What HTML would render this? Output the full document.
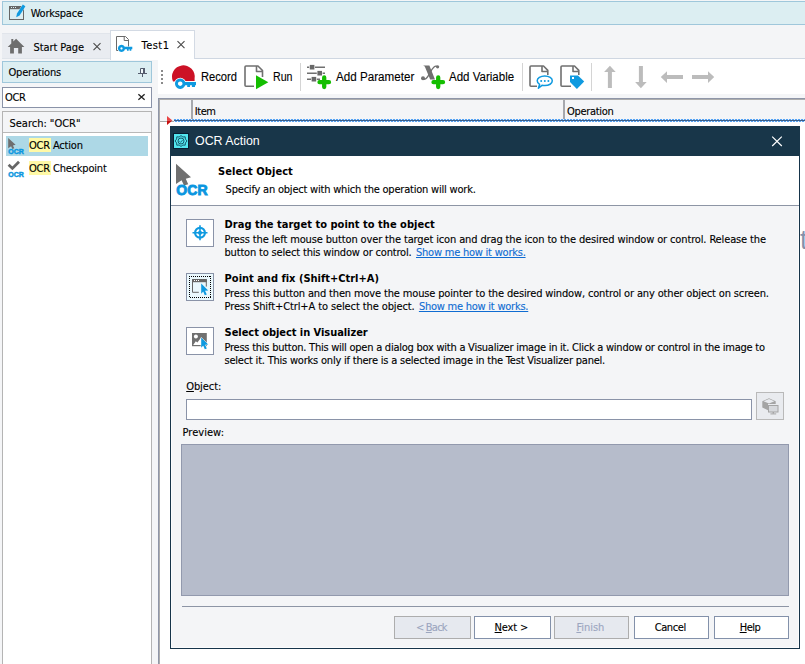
<!DOCTYPE html>
<html><head><meta charset="utf-8"><title>Workspace</title>
<style>
*{box-sizing:border-box;margin:0;padding:0}
html,body{width:805px;height:664px;overflow:hidden;background:#f4f5f7;color:#000}
#root{position:relative;width:805px;height:664px;overflow:hidden;background:#f4f5f7}
.a{position:absolute;white-space:nowrap}
svg.a{overflow:visible}
.lnk{color:#0f6cd2;text-decoration:underline;text-underline-offset:1px}
u{text-underline-offset:1px}
.btn{position:absolute;top:616px;height:23px;border:1px solid #8391aa;background:#fff}
.btn.dis{background:#e6e9ef;border-color:#adadad}
.ib{position:absolute;left:186px;width:28px;height:28px;border:1px solid #8a93a8;background:#fff}
.ocr{font-family:"Liberation Sans","DejaVu Sans",sans-serif;font-weight:bold;color:#0a96e0;-webkit-text-stroke:0.9px #0a96e0}

.t,.s{-webkit-text-stroke:0.12px currentColor}

.t{font-family:"DejaVu Sans Condensed","Liberation Sans",sans-serif;font-weight:normal;font-size:11px;line-height:14px}
.tb{font-family:"DejaVu Sans Condensed","Liberation Sans",sans-serif;font-weight:bold;font-size:11px;line-height:14px}
.s{font-family:"Liberation Sans","DejaVu Sans",sans-serif;font-weight:normal;font-size:12.5px;line-height:15.5px}
.h{font-family:"Liberation Sans","DejaVu Sans",sans-serif;font-weight:normal;font-size:13px;line-height:16px}
</style></head><body><div id="root">
<!-- workspace bar -->
<div class="a" style="left:2px;top:1px;width:810px;height:24px;background:#dceef2;border:1px solid #9fc7db"></div>
<svg class="a" style="left:0;top:0" width="40" height="26" viewBox="0 0 40 26">
 <rect x="9.5" y="6.5" width="14" height="13" fill="none" stroke="#666" stroke-width="1"/>
 <rect x="9" y="6" width="15" height="3.2" fill="#666"/>
 <rect x="11" y="7" width="1" height="1" fill="#dceef2"/><rect x="13" y="7" width="1" height="1" fill="#dceef2"/><rect x="15" y="7" width="1" height="1" fill="#dceef2"/>
 <path d="M16.2 17.3 L17 13.6 L22.8 4.6 L25.4 6.2 L19.6 15.4 Z" fill="#0f9ae0" stroke="#dceef2" stroke-width="0.8" paint-order="stroke"/>
</svg>

<!-- tab strip -->
<div class="a" style="left:2px;top:33px;width:108px;height:25px;background:#e9ecf1;border-top:1px solid #e1e5eb"></div>
<div class="a" style="left:195px;top:58px;width:620px;height:1px;background:#cfd7e2"></div>
<div class="a" style="left:2px;top:58px;width:109px;height:1px;background:#dfe4ea"></div>
<div class="a" style="left:110px;top:30px;width:85px;height:30px;background:#fff;border:1px solid #d3dae4;border-bottom:none"></div>
<svg class="a" style="left:0;top:28px" width="200" height="32" viewBox="0 28 200 32">
 <!-- home -->
 <path d="M16.1 38.7 L24.4 46.9 L21.9 46.9 L21.9 53.4 L18.2 53.4 L18.2 48 L13.9 48 L13.9 53.4 L10.1 53.4 L10.1 46.9 L7.7 46.9 L11.3 43.4 L11.3 39 L13.3 39 L13.3 41.5 Z" fill="#6e6e6e"/>
 <!-- close x start page -->
 <path d="M93.5 43.2 L100.5 50.2 M100.5 43.2 L93.5 50.2" stroke="#4a4a4a" stroke-width="1.1" fill="none"/>
 <!-- doc key -->
 <path d="M116.5 50.5 V36.5 H125.5 L128.5 39.5 V46.5 M124.2 36.5 V40.5 H128.5 M116.5 50.5 H118" fill="none" stroke="#6a6a6a" stroke-width="1"/>
 <path d="M121.5 44.8 a3.6 3.6 0 1 0 0.001 0 Z M121.5 47.3 a1.1 1.1 0 1 1 -0.001 0 Z" fill="#0f9ae0" fill-rule="evenodd"/>
 <path d="M124.5 46.8 H132.3 V49.2 H131.3 V50.8 H129.6 V49.2 H128.7 V50.8 H127 V49.2 H124.5 Z" fill="#0f9ae0"/>
 <!-- close x test1 -->
 <path d="M177.5 41.2 L184.5 48.2 M184.5 41.2 L177.5 48.2" stroke="#4a4a4a" stroke-width="1.1" fill="none"/>
</svg>

<!-- operations panel -->
<div class="a" style="left:2px;top:61px;width:150px;height:22px;background:#dceef2;border:1px solid #9fc7db"></div>
<svg class="a" style="left:136px;top:64px" width="14" height="16" viewBox="136 64 14 16">
 <path d="M140.5 73 V68.5 H144" fill="none" stroke="#555c6e" stroke-width="1"/><rect x="141" y="69" width="2" height="4" fill="#f2fafc"/>
 <rect x="143" y="68" width="2" height="5" fill="#555c6e"/>
 <rect x="138" y="73" width="9" height="1" fill="#555c6e"/>
 <rect x="142" y="74" width="1" height="3" fill="#555c6e"/>
</svg>
<div class="a" style="left:2px;top:87px;width:150px;height:21px;background:#fff;border:1px solid #8a93a8"></div>
<svg class="a" style="left:136px;top:92px" width="12" height="10" viewBox="136 92 12 10">
 <path d="M138.4 94.2 L144.6 99.8 M144.6 94.2 L138.4 99.8" stroke="#222" stroke-width="1.3" fill="none"/>
</svg>
<div class="a" style="left:2px;top:111px;width:150px;height:560px;background:#fff;border:1px solid #b4b4b4"></div>
<div class="a" style="left:3px;top:112px;width:148px;height:21px;background:#f4f5f7;border-bottom:1px solid #b8b8b8"></div>
<div class="a" style="left:6px;top:136px;width:142px;height:20px;background:#add8e6"></div>
<div class="a" style="left:29px;top:138px;width:22px;height:14px;background:#fff9a6"></div>
<div class="a" style="left:29px;top:161px;width:22px;height:14px;background:#fff9a6"></div>
<svg class="a" style="left:6px;top:136px" width="22" height="44" viewBox="6 136 22 44">
 <path d="M8.2 138 L15.6 144.8 L12.9 145.4 L14.3 148.3 L12.4 149 L11.1 146.2 L8.2 148.3 Z" fill="#6e6e6e"/>
 <path d="M8.6 164.8 L12.4 168.4 L19 161.8" fill="none" stroke="#666" stroke-width="2.8"/>
</svg>
<div class="a ocr" style="left:8.2px;top:147.8px;font-size:7px;line-height:8px;-webkit-text-stroke-width:0.45px">OCR</div>
<div class="a ocr" style="left:8.2px;top:170.8px;font-size:7px;line-height:8px;-webkit-text-stroke-width:0.45px">OCR</div>

<!-- toolbar -->
<div class="a" style="left:158px;top:59px;width:650px;height:35px;background:#fff"></div>
<svg class="a" style="left:158px;top:59px" width="647" height="35" viewBox="158 59 647 35">
 <g fill="#8a8a8a"><rect x="161" y="70" width="2" height="2"/><rect x="161" y="74" width="2" height="2"/><rect x="161" y="78" width="2" height="2"/><rect x="161" y="82" width="2" height="2"/></g>
 <!-- record -->
 <path d="M173 81.5 A11.4 11.4 0 1 1 194.6 78.6 L194.6 81 L173.2 81.6 Z" fill="#cc1226"/>
 <g stroke="#fff" stroke-width="1.7" fill="#fff"><circle cx="180.2" cy="83.7" r="5.2"/><path d="M184 82 H196 V85.3 H195 V87 H191.9 V85.3 H190 V87 H187.2 V85.3 H184 Z"/></g>
 <path d="M180.2 78.5 a5.2 5.2 0 1 0 0.001 0 Z M180.2 81.4 a2.3 2.3 0 1 1 -0.001 0 Z" fill="#0f9ae0" fill-rule="evenodd"/>
 <path d="M184 82 H196 V85.3 H195 V87 H191.9 V85.3 H190 V87 H187.2 V85.3 H184 Z" fill="#0f9ae0"/>
 <!-- run -->
 <path d="M254 86.3 H246 Q245 86.3 245 85.3 V67 Q245 66 246 66 H258 L262.5 70.5 V77 M256.5 66 V71.5 H262.5" fill="none" stroke="#707070" stroke-width="1.6" stroke-linejoin="round"/>
 <path d="M256 75.2 L268.3 82.2 L256 89.2 Z" fill="#14be00"/>
 <rect x="300" y="63" width="1" height="28" fill="#d4d4d4"/>
 <!-- add parameter -->
 <g stroke="#707070" stroke-width="1.6"><path d="M307 67.2 H325 M307 73.2 H325 M307 79.2 H320"/></g>
 <g fill="#686868" stroke="#fff" stroke-width="1.2" paint-order="stroke"><rect x="309.8" y="64.9" width="4.6" height="4.6"/><rect x="317.4" y="70.9" width="4.6" height="4.6"/><rect x="311.6" y="76.9" width="4.6" height="4.6"/></g>
 <path d="M324.2 77.5 V87 M319.5 82.2 H329" stroke="#14be00" stroke-width="4.3" stroke-linecap="round" fill="none"/>
 <!-- add variable -->
 <path d="M423.2 65.4 H429.4 L435 79.4 H430.2 L424.8 66.6 Z" fill="#707070"/>
 <path d="M437.8 67.2 C435.5 64.2 432.5 68.2 430.6 71.6 C428.6 75.2 425.8 81.5 422.6 78.4" fill="none" stroke="#707070" stroke-width="1.3"/>
 <circle cx="437.6" cy="66.8" r="1.6" fill="#707070"/><circle cx="423" cy="78.2" r="2" fill="#707070"/>
 <path d="M438.2 77.5 V87 M433.5 82.2 H443" stroke="#14be00" stroke-width="4.3" stroke-linecap="round" fill="none"/>
 <rect x="522" y="63" width="1" height="28" fill="#d4d4d4"/>
 <!-- doc comment -->
 <path d="M537 86.3 H531 Q530 86.3 530 85.3 V67 Q530 66 531 66 H543.5 L547.8 70.4 V75 M542 66 V71.5 H547.8" fill="none" stroke="#707070" stroke-width="1.6" stroke-linejoin="round"/>
 <path d="M544.8 76 C549.2 76 552.3 78.2 552.3 80.8 C552.3 83.6 549 85.6 544.8 85.6 C543.8 85.6 542.9 85.5 542 85.3 L538.4 88.2 L539.6 84.3 C538 83.4 537.2 82.2 537.2 80.8 C537.2 78.2 540.4 76 544.8 76 Z" fill="#fff" stroke="#0f9ae0" stroke-width="1.5" stroke-linejoin="round"/>
 <g fill="#0f9ae0"><circle cx="541.2" cy="80.9" r="1"/><circle cx="544.8" cy="80.9" r="1"/><circle cx="548.4" cy="80.9" r="1"/></g>
 <!-- doc tag -->
 <path d="M571 86.3 H562 Q561 86.3 561 85.3 V67 Q561 66 562 66 H574.5 L578.8 70.4 V75 M573 66 V71.5 H578.8" fill="none" stroke="#707070" stroke-width="1.6" stroke-linejoin="round"/>
 <path d="M570 75.4 H578 L584.2 81.6 L576.9 88.9 L570 82 Z" fill="#0f9ae0" stroke="#fff" stroke-width="0.8" paint-order="stroke"/>
 <rect x="572" y="77" width="2" height="2" fill="#fff"/>
 <rect x="591" y="63" width="1" height="28" fill="#d4d4d4"/>
 <!-- arrows -->
 <g fill="#bcbcbc">
  <path d="M609.9 65.8 L615.7 72 H611.9 V88 H607.9 V72 H604.1 Z"/>
  <path d="M640.9 88.2 L646.7 82 H642.9 V66 H638.9 V82 H635.1 Z"/>
  <path d="M660.8 77.1 L667 71.3 V75.1 H683 V79.1 H667 V82.9 Z"/>
  <path d="M714.2 77.1 L708 71.3 V75.1 H692 V79.1 H708 V82.9 Z"/>
 </g>
</svg>

<!-- grid -->
<div class="a" style="left:158px;top:98px;width:650px;height:570px;background:#fff;border-left:1px solid #8f96a8;border-top:1px solid #8f96a8"></div>
<div class="a" style="left:159px;top:99px;width:650px;height:570px;border-left:1px solid #adadad;border-top:1px solid #adadad"></div>
<div class="a" style="left:160px;top:100px;width:650px;height:21px;background:#f4f5f7"></div>
<div class="a" style="left:160px;top:121px;width:14px;height:1px;background:#a9a9a9"></div>
<div class="a" style="left:191px;top:100px;width:2px;height:20px;background:#a6a8ad"></div>
<div class="a" style="left:563px;top:100px;width:2px;height:20px;background:#a6a8ad"></div>
<div class="a" style="left:174px;top:119px;width:640px;height:1px;background:repeating-linear-gradient(90deg,#55a2f2 0 2px,#e6effa 2px 3px)"></div>
<div class="a" style="left:174px;top:120px;width:640px;height:1px;background:#3b5f8a"></div>
<div class="a" style="left:174px;top:121px;width:640px;height:1px;background:repeating-linear-gradient(90deg,#e6effa 0 1px,#55a2f2 1px 3px)"></div>
<svg class="a" style="left:166px;top:115px" width="8" height="12" viewBox="166 115 8 12"><path d="M167 116 L172.4 120.5 L167 120.5 Z" fill="#e84444"/><path d="M167 120.5 L172.4 120.5 L167 125 Z" fill="#c80e0e"/></svg>

<div class="a" style="left:800px;top:223.5px;font-family:'Liberation Sans',sans-serif;font-size:27px;line-height:32px;color:#8691ac">t</div>
<!-- dialog -->
<div class="a" style="left:170px;top:126px;width:630px;height:523px;background:#f4f5f7;border:1px solid #16344a;box-shadow:inset 0 0 0 1px #fbfcfd"></div>
<div class="a" style="left:170px;top:126px;width:630px;height:30px;background:#183649"></div>
<svg class="a" style="left:170px;top:126px" width="630" height="30" viewBox="170 126 630 30">
 <rect x="173.5" y="133.5" width="15" height="15" fill="#52e6f0" stroke="#081f33" stroke-width="1"/>
 <path d="M181 135.6 L182.9 137 L185.2 136.8 L185.4 139.1 L187 141 L185.4 142.9 L185.2 145.2 L182.9 145 L181 146.4 L179.1 145 L176.8 145.2 L176.6 142.9 L175 141 L176.6 139.1 L176.8 136.8 L179.1 137 Z" fill="none" stroke="#0f4a5c" stroke-width="0.9"/>
 <circle cx="181" cy="141" r="3" fill="none" stroke="#0f4a5c" stroke-width="0.9"/>
 <path d="M179.4 141.2 L180.6 142.4 L182.8 139.8" fill="none" stroke="#1c6478" stroke-width="0.9"/>
 <path d="M772.2 136.6 L781.8 146 M781.8 136.6 L772.2 146" stroke="#fff" stroke-width="1.2" fill="none"/>
</svg>
<div class="a" style="left:171px;top:156px;width:628px;height:50px;background:#fff;border-bottom:1px solid #8d95a5"></div>
<svg class="a" style="left:172px;top:160px" width="24" height="28" viewBox="172 160 24 28">
 <path d="M176 163.8 L191 177.3 L185.8 178.8 L188.2 184.2 L184 185.6 L181.6 180.3 L176 184 Z" fill="#707070"/>
</svg>
<div class="a ocr" style="left:176.2px;top:182.4px;font-size:14px;line-height:17px;letter-spacing:0.1px">OCR</div>

<div class="ib" style="top:219px"></div>
<svg class="a" style="left:186px;top:219px" width="28" height="28" viewBox="186 219 28 28">
 <circle cx="200" cy="232.8" r="4.9" fill="none" stroke="#0f9ae0" stroke-width="2.2"/>
 <path d="M192.5 232.8 H207.5 M200 225.3 V240.3" stroke="#0f9ae0" stroke-width="1.6" fill="none"/>
 <circle cx="200" cy="232.8" r="2.1" fill="#0f9ae0"/>
</svg>
<div class="ib" style="top:273px;background:#eaf8fd"></div>
<svg class="a" style="left:186px;top:273px" width="28" height="28" viewBox="186 273 28 28">
 <path d="M189 276.5 H210 M190 297.5 H211 M189.5 278 V297 M210.5 276 V297" fill="none" stroke="#000" stroke-width="1" stroke-dasharray="1 1" shape-rendering="crispEdges"/>
 <path d="M198.8 292.3 H192.5 V279.5 H206.3 V286.6" fill="none" stroke="#666" stroke-width="1"/>
 <rect x="192" y="279" width="14.8" height="3.2" fill="#666"/>
 <rect x="194" y="280" width="1" height="1" fill="#fff"/><rect x="196" y="280" width="1" height="1" fill="#fff"/><rect x="198" y="280" width="1" height="1" fill="#fff"/>
 <path d="M201.2 283.6 L208.2 290.4 L205 290.8 L206.8 294.4 L204.8 295.2 L203.2 291.6 L201.2 293.8 Z" fill="#0f9ae0" stroke="#eaf8fd" stroke-width="0.8" paint-order="stroke"/>
</svg>
<div class="ib" style="top:327px"></div>
<svg class="a" style="left:186px;top:327px" width="28" height="28" viewBox="186 327 28 28">
 <rect x="192" y="333" width="14.8" height="13.2" fill="#707070"/>
 <circle cx="195.9" cy="336.6" r="2" fill="#fff"/>
 <path d="M193.2 345 L195.8 341.2 L197.4 342.4 L201 337.8 L203 340 V345 Z" fill="#fff"/>
 <path d="M201.2 337.6 L208.2 344.4 L205 344.8 L206.8 348.4 L204.8 349.2 L203.2 345.6 L201.2 347.8 Z" fill="#0f9ae0" stroke="#fff" stroke-width="1" paint-order="stroke"/>
</svg>

<div class="a" style="left:186px;top:399px;width:566px;height:21px;background:#fff;border:1px solid #8a93a8"></div>
<div class="a" style="left:756px;top:392px;width:28px;height:28px;background:#e9ebef;border:1px solid #b9b9b9"></div>
<svg class="a" style="left:756px;top:392px" width="28" height="28" viewBox="756 392 28 28">
 <path d="M762.3 401.2 L769 398.2 L775.7 401.2 V404 H768 V410.2 L762.3 407.6 Z" fill="#a4a4a4"/>
 <path d="M763.6 401.3 L769 399 L774.4 401.3 L769 403.6 Z" fill="#e9ebef"/>
 <rect x="768.5" y="405.5" width="9.5" height="6.5" fill="#d6d8dc" stroke="#a4a4a4" stroke-width="1"/>
 <rect x="772.6" y="412" width="1.4" height="1.6" fill="#a4a4a4"/><rect x="770.4" y="413.4" width="5.8" height="1" fill="#a4a4a4"/>
</svg>
<div class="a" style="left:181px;top:444px;width:608px;height:152px;background:#b6bccb;border:1px solid #9299ad"></div>
<div class="a" style="left:182px;top:606px;width:607px;height:1px;background:#8d95a5"></div>

<div class="btn dis" style="left:394px;width:77px"></div>
<div class="btn" style="left:474px;width:77px"></div>
<div class="btn dis" style="left:554px;width:75px"></div>
<div class="btn" style="left:634px;width:75px"></div>
<div class="btn" style="left:714px;width:75px"></div>

<!-- text -->
<div class="a t" style="left:30.7px;top:7.0px;letter-spacing:-0.216px">Workspace</div>
<div class="a t" style="left:33.5px;top:41.0px;letter-spacing:-0.082px">Start Page</div>
<div class="a t" style="left:141.6px;top:38.5px;letter-spacing:0.452px">Test1</div>
<div class="a t" style="left:8.5px;top:66.0px;letter-spacing:-0.190px">Operations</div>
<div class="a t" style="left:5.0px;top:91.0px;letter-spacing:-0.389px">OCR</div>
<div class="a t" style="left:9.5px;top:117.0px;letter-spacing:-0.012px">Search: "OCR"</div>
<div class="a t" style="left:29.0px;top:139.0px;letter-spacing:-0.188px">OCR Action</div>
<div class="a t" style="left:29.0px;top:162.0px;letter-spacing:-0.200px">OCR Checkpoint</div>
<div class="a s" style="left:200.5px;top:70.0px;transform-origin:0 0;transform:scaleX(0.8934)">Record</div>
<div class="a s" style="left:272.5px;top:70.0px;transform-origin:0 0;transform:scaleX(0.8501)">Run</div>
<div class="a s" style="left:335.5px;top:70.0px;transform-origin:0 0;transform:scaleX(0.9313)">Add Parameter</div>
<div class="a s" style="left:449.4px;top:70.0px;transform-origin:0 0;transform:scaleX(0.9214)">Add Variable</div>
<div class="a t" style="left:194.7px;top:105.0px;letter-spacing:-0.410px">Item</div>
<div class="a t" style="left:567.0px;top:105.0px;letter-spacing:-0.306px">Operation</div>
<div class="a h" style="left:194.6px;top:133.0px;transform-origin:0 0;transform:scaleX(0.9526);color:#fff">OCR Action</div>
<div class="a tb" style="left:218.0px;top:165.0px;letter-spacing:0.051px">Select Object</div>
<div class="a t" style="left:225.6px;top:183.0px;letter-spacing:-0.207px">Specify an object with which the operation will work.</div>
<div class="a tb" style="left:224.6px;top:218.0px;letter-spacing:0.020px">Drag the target to point to the object</div>
<div class="a t" style="left:224.5px;top:233.0px;letter-spacing:-0.135px">Press the left mouse button over the target icon and drag the icon to the desired window or control. Release the</div>
<div class="a t" style="left:224.5px;top:246.0px;letter-spacing:-0.174px">button to select this window or control.</div>
<div class="a t lnk" style="left:416.0px;top:246.0px;letter-spacing:-0.225px">Show me how it works.</div>
<div class="a tb" style="left:224.6px;top:272.0px;letter-spacing:-0.009px">Point and fix (Shift+Ctrl+A)</div>
<div class="a t" style="left:224.5px;top:287.0px;letter-spacing:-0.152px">Press this button and then move the mouse pointer to the desired window, control or any other object on screen.</div>
<div class="a t" style="left:224.5px;top:300.0px;letter-spacing:-0.107px">Press Shift+Ctrl+A to select the object.</div>
<div class="a t lnk" style="left:418.9px;top:300.0px;letter-spacing:-0.235px">Show me how it works.</div>
<div class="a tb" style="left:224.6px;top:326.0px;letter-spacing:-0.054px">Select object in Visualizer</div>
<div class="a t" style="left:224.5px;top:341.0px;letter-spacing:-0.245px">Press this button. This will open a dialog box with a Visualizer image in it. Click a window or control in the image to</div>
<div class="a t" style="left:224.5px;top:354.0px;letter-spacing:-0.209px">select it. This works only if there is a selected image in the Test Visualizer panel.</div>
<div class="a t" style="left:186.2px;top:380.0px;letter-spacing:-0.080px"><u>O</u>bject:</div>
<div class="a t" style="left:182.5px;top:425.8px;letter-spacing:0.040px">Preview:</div>
<div class="a t" style="left:415.9px;top:621.0px;letter-spacing:-0.757px;color:#9ca6bf">&lt; <u>B</u>ack</div>
<div class="a t" style="left:494.6px;top:621.0px;letter-spacing:-0.137px"><u>N</u>ext &gt;</div>
<div class="a t" style="left:576.4px;top:621.0px;letter-spacing:-0.022px;color:#9ca6bf"><u>F</u>inish</div>
<div class="a t" style="left:654.7px;top:621.0px;letter-spacing:-0.409px">Cancel</div>
<div class="a t" style="left:739.7px;top:621.0px;letter-spacing:-0.493px"><u>H</u>elp</div>
</div></body></html>
